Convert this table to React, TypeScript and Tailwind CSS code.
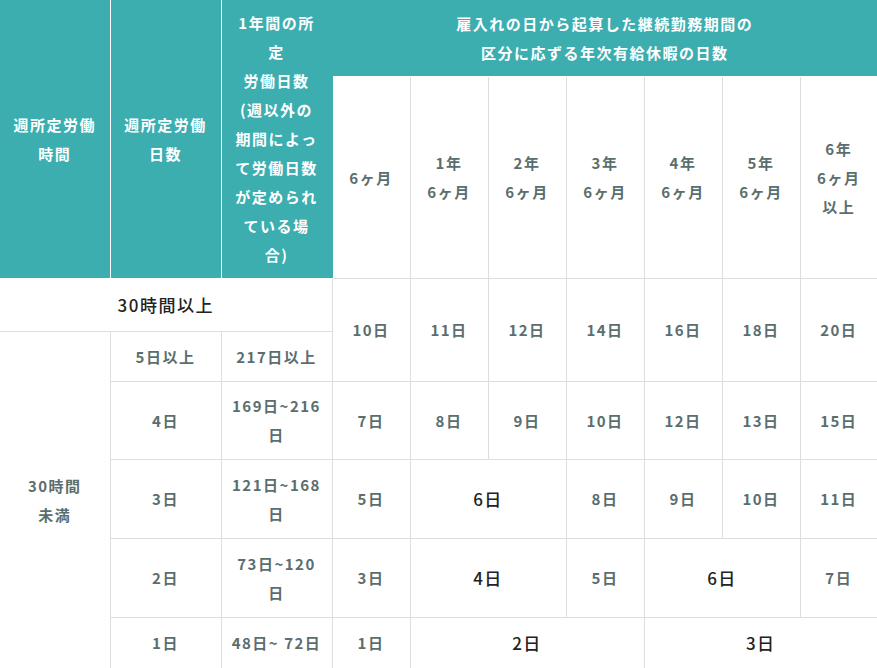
import React from 'react';

const teal = 'bg-[#3caeb0] text-white font-bold border border-white';
const grey = 'text-[#5b6e6e] font-bold border border-[#dedede]';
const dark = 'text-[#222222] font-medium text-[17px] border border-[#dedede]';

type Cell = { t: React.ReactNode; span?: number; rows?: number; big?: boolean };

const periods: React.ReactNode[] = [
  '6ヶ月',
  <>1年<br />6ヶ月</>,
  <>2年<br />6ヶ月</>,
  <>3年<br />6ヶ月</>,
  <>4年<br />6ヶ月</>,
  <>5年<br />6ヶ月</>,
  <>6年<br />6ヶ月<br />以上</>,
];

const Td: React.FC<{ c: Cell; extra?: string }> = ({ c, extra = '' }) => (
  <td colSpan={c.span} rowSpan={c.rows} className={`${c.big ? dark : grey} px-2 ${extra}`}>
    {c.t}
  </td>
);

const App: React.FC = () => {
  return (
    <div
      className="w-[877px] h-[668px] overflow-hidden bg-white"
      style={{ fontFamily: '"Noto Sans CJK JP", "Noto Sans", sans-serif' }}
    >
      <table className="w-[877px] table-fixed border-collapse text-center text-[15px] leading-[29px] tracking-[0.1em]">
        <colgroup>
          <col className="w-[110px]" />
          <col className="w-[111px]" />
          <col className="w-[111px]" />
          <col className="w-[78px]" />
          <col className="w-[78px]" />
          <col className="w-[78px]" />
          <col className="w-[78px]" />
          <col className="w-[78px]" />
          <col className="w-[78px]" />
          <col className="w-[77px]" />
        </colgroup>
        <thead>
          <tr className="h-[76px]">
            <th rowSpan={2} className={`${teal} border-l-0 border-t-0 px-2`}>
              週所定労働<br />時間
            </th>
            <th rowSpan={2} className={`${teal} border-t-0 px-2`}>
              週所定労働<br />日数
            </th>
            <th rowSpan={2} className={`${teal} border-t-0 border-r-[#3caeb0] px-2 py-2`}>
              1年間の所<br />定<br />労働日数<br />(週以外の<br />期間によっ<br />て労働日数<br />が定められ<br />ている場<br />合)
            </th>
            <th colSpan={7} className={`${teal} border-t-0 border-r-0 py-2`}>
              雇入れの日から起算した継続勤務期間の<br />区分に応ずる年次有給休暇の日数
            </th>
          </tr>
          <tr className="h-[202px]">
            {periods.map((p, i) => (
              <th key={i} className={`${grey} px-1 ${i === 6 ? 'border-r-0' : ''}`}>
                {p}
              </th>
            ))}
          </tr>
        </thead>
        <tbody>
          <tr className="h-[53px]">
            <td colSpan={3} className={`${dark} border-l-0`}>30時間以上</td>
            {['10日', '11日', '12日', '14日', '16日', '18日', '20日'].map((d, i) => (
              <Td key={d} c={{ t: d, rows: 2 }} extra={i === 6 ? 'border-r-0' : ''} />
            ))}
          </tr>
          <tr className="h-[50px]">
            <td rowSpan={5} className={`${grey} border-l-0 border-b-0`}>
              30時間<br />未満
            </td>
            <Td c={{ t: '5日以上' }} />
            <Td c={{ t: '217日以上' }} />
          </tr>
          <tr className="h-[78px]">
            <Td c={{ t: '4日' }} />
            <Td c={{ t: <>169日~216<br />日</> }} />
            {['7日', '8日', '9日', '10日', '12日', '13日', '15日'].map((d, i) => (
              <Td key={d} c={{ t: d }} extra={i === 6 ? 'border-r-0' : ''} />
            ))}
          </tr>
          <tr className="h-[79px]">
            <Td c={{ t: '3日' }} />
            <Td c={{ t: <>121日~168<br />日</> }} />
            <Td c={{ t: '5日' }} />
            <Td c={{ t: '6日', span: 2, big: true }} />
            <Td c={{ t: '8日' }} />
            <Td c={{ t: '9日' }} />
            <Td c={{ t: '10日' }} />
            <Td c={{ t: '11日' }} extra="border-r-0" />
          </tr>
          <tr className="h-[79px]">
            <Td c={{ t: '2日' }} />
            <Td c={{ t: <>73日~120<br />日</> }} />
            <Td c={{ t: '3日' }} />
            <Td c={{ t: '4日', span: 2, big: true }} />
            <Td c={{ t: '5日' }} />
            <Td c={{ t: '6日', span: 2, big: true }} />
            <Td c={{ t: '7日' }} extra="border-r-0" />
          </tr>
          <tr className="h-[51px]">
            <Td c={{ t: '1日' }} />
            <Td c={{ t: '48日~ 72日' }} />
            <Td c={{ t: '1日' }} />
            <Td c={{ t: '2日', span: 3, big: true }} />
            <Td c={{ t: '3日', span: 3, big: true }} extra="border-r-0" />
          </tr>
        </tbody>
      </table>
    </div>
  );
};

export default App;
